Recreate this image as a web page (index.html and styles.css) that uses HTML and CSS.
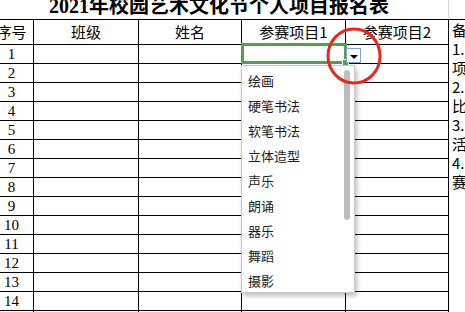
FILE: index.html
```html
<!DOCTYPE html>
<html lang="zh">
<head>
<meta charset="utf-8">
<link rel="stylesheet" href="styles.css">
</head>
<body>
<div class="sheet">
  <div class="title-row"><div class="title">2021年校园艺术文化节个人项目报名表</div></div>
  <div class="grid">
    <div class="h">序号</div><div class="h">班级</div><div class="h">姓名</div><div class="h">参赛项目1</div><div class="h">参赛项目2</div>
    <div class="notes">备<br>1.<br>项<br>2.<br>比<br>3.<br>活<br>4.<br>赛<br></div>
    <div class="n">1</div><div></div><div></div><div></div><div></div>
    <div class="n">2</div><div></div><div></div><div></div><div></div>
    <div class="n">3</div><div></div><div></div><div></div><div></div>
    <div class="n">4</div><div></div><div></div><div></div><div></div>
    <div class="n">5</div><div></div><div></div><div></div><div></div>
    <div class="n">6</div><div></div><div></div><div></div><div></div>
    <div class="n">7</div><div></div><div></div><div></div><div></div>
    <div class="n">8</div><div></div><div></div><div></div><div></div>
    <div class="n">9</div><div></div><div></div><div></div><div></div>
    <div class="n">10</div><div></div><div></div><div></div><div></div>
    <div class="n">11</div><div></div><div></div><div></div><div></div>
    <div class="n">12</div><div></div><div></div><div></div><div></div>
    <div class="n">13</div><div></div><div></div><div></div><div></div>
    <div class="n">14</div><div></div><div></div><div></div><div></div>
    <div class="n"></div><div></div><div></div><div></div><div></div>
  </div>

  <div class="selection"><span class="handle"></span></div>
  <div class="dd-btn"><span class="tri"></span></div>
  <div class="dd-list">
    <div class="item">绘画</div>
    <div class="item">硬笔书法</div>
    <div class="item">软笔书法</div>
    <div class="item">立体造型</div>
    <div class="item">声乐</div>
    <div class="item">朗诵</div>
    <div class="item">器乐</div>
    <div class="item">舞蹈</div>
    <div class="item">摄影</div>
    <div class="thumb"></div>
  </div>
  <svg class="ring" width="60" height="62" viewBox="0 0 60 62">
    <ellipse cx="29" cy="31" rx="26" ry="27" fill="none" stroke="#e8281e" stroke-width="3"/>
  </svg>
</div>
</body>
</html>
```
FILE: styles.css
```css
html, body {
  margin: 0;
  padding: 0;
  background: #fff;
  overflow: hidden;
}
body {
  width: 465px;
  height: 312px;
  font-family: "Noto Sans CJK SC", sans-serif;
  color: #000;
}
.sheet {
  position: relative;
  width: 465px;
  height: 312px;
  overflow: hidden;
}
.title-row {
  margin-left: -10px;
  width: 458px;
  height: 19px;
  border-right: 1px solid #d6d6d6;
  overflow: hidden;
  text-align: center;
}
.title {
  margin-top: -3px;
  font-family: "Liberation Serif", "Noto Sans CJK SC", serif;
  font-weight: bold;
  font-size: 20px;
  line-height: 19px;
  white-space: nowrap;
}
.grid {
  margin-left: -10px;
  width: 519px;
  display: grid;
  grid-template-columns: 43px 104px 102px 103px 102px 60px;
  grid-template-rows: 24px repeat(15, 18px);
  gap: 1px;
  background: #000;
  border-top: 1px solid #000;
}
.grid > div {
  background: #fff;
}
.h {
  font-size: 15px;
  line-height: 24px;
  text-align: center;
  white-space: nowrap;
  overflow: hidden;
}
.n {
  font-family: "Liberation Serif", serif;
  font-size: 15px;
  line-height: 19px;
  text-align: center;
}
.notes {
  grid-column: 6;
  grid-row: 1 / span 16;
  font-size: 15px;
  line-height: 19px;
  padding-left: 3px;
  padding-top: 0;
}
.selection {
  position: absolute;
  left: 241px;
  top: 43px;
  width: 100px;
  height: 15px;
  border: 3px solid #4ea34a;
}
.handle {
  position: absolute;
  right: -5px;
  bottom: -5px;
  width: 5px;
  height: 5px;
  background: #4ea34a;
  border: 1px solid #fff;
}
.dd-btn {
  position: absolute;
  left: 346px;
  top: 48px;
  width: 13px;
  height: 13px;
  border: 1px solid #8aa2c4;
  background: #fff;
  display: flex;
  align-items: center;
  justify-content: center;
}
.tri {
  margin-top: 2px;
  width: 0;
  height: 0;
  border-left: 4px solid transparent;
  border-right: 4px solid transparent;
  border-top: 4px solid #000;
}
.dd-list {
  position: absolute;
  left: 241px;
  top: 65px;
  width: 112px;
  height: 224px;
  padding-top: 2px;
  background: #fff;
  border: 1px solid #c8c8c8;
  box-shadow: 2px 3px 5px rgba(0, 0, 0, 0.25);
  overflow: hidden;
}
.item {
  height: 25px;
  line-height: 25px;
  padding-left: 6px;
  font-size: 13px;
  color: #1a1a1a;
  white-space: nowrap;
}
.thumb {
  position: absolute;
  left: 102px;
  top: 4px;
  width: 6px;
  height: 150px;
  border-radius: 3px;
  background: #bcbcbc;
}
.ring {
  position: absolute;
  left: 325px;
  top: 25px;
}
```
